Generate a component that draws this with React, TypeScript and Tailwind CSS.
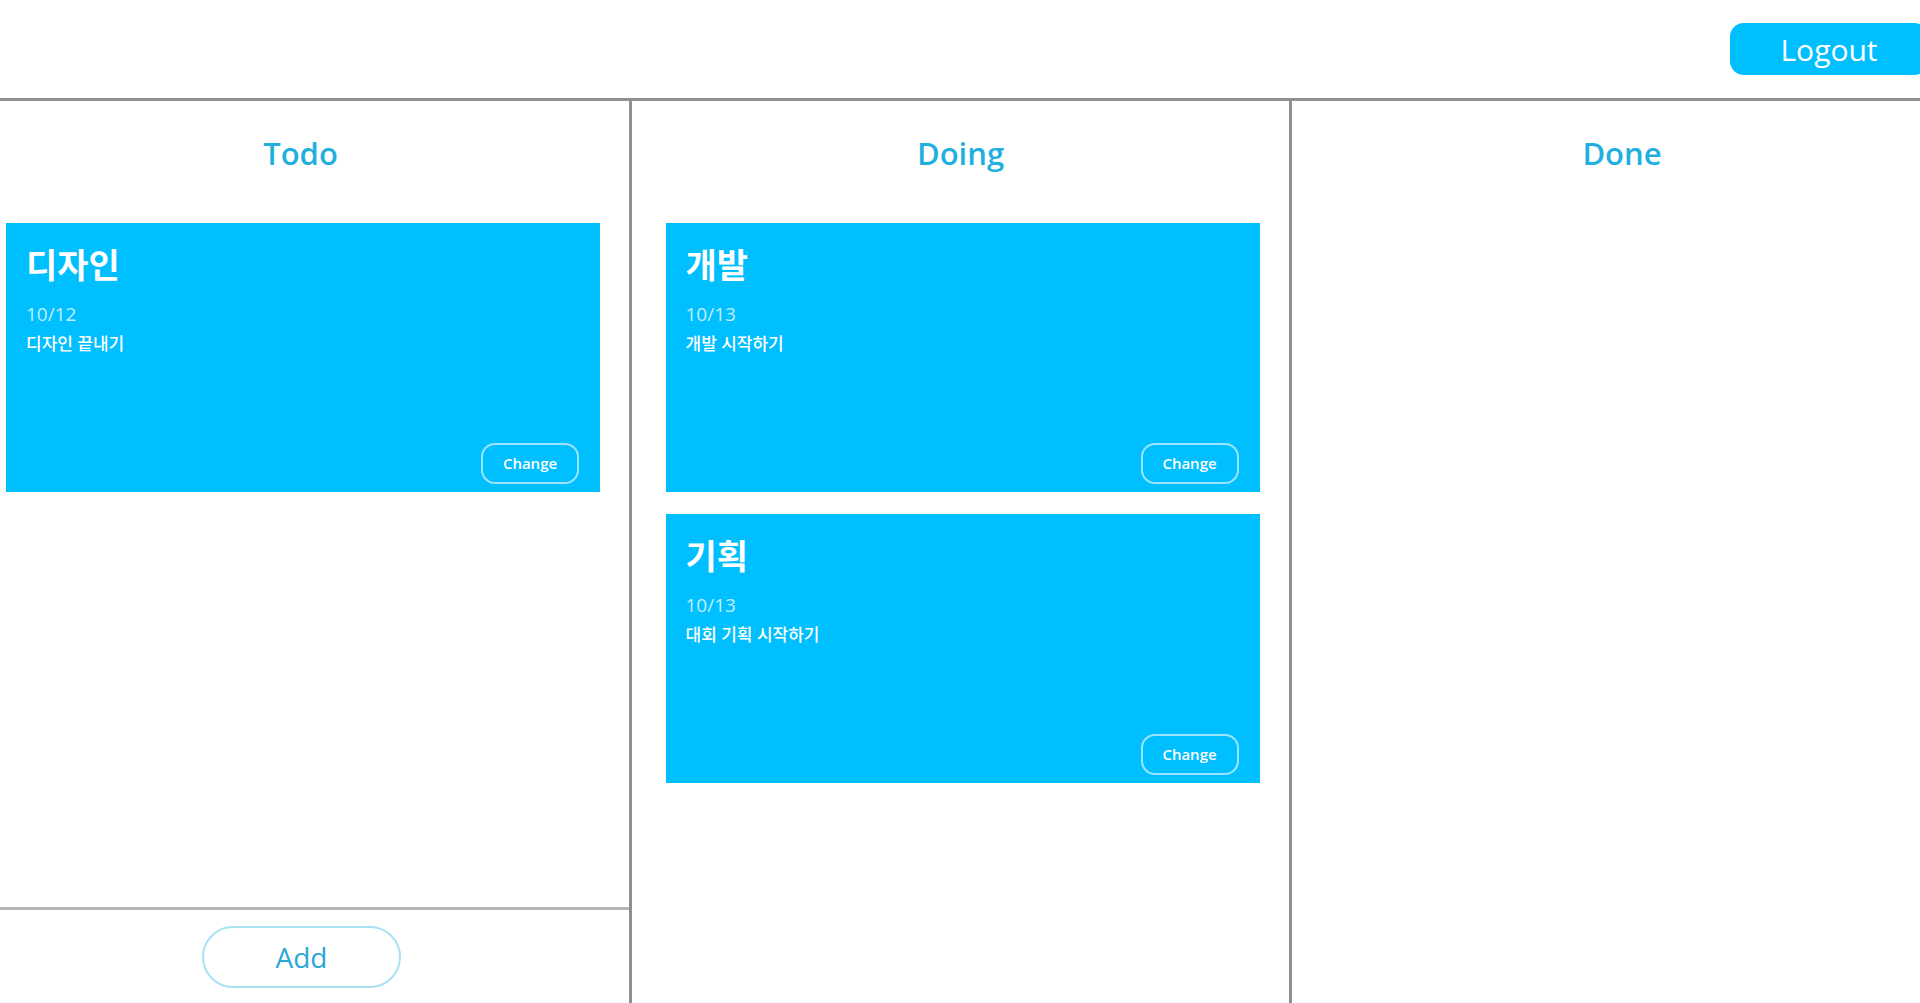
import React from "react";

interface Task {
  title: string;
  date: string;
  desc: string;
}

const todo: Task[] = [{ title: "디자인", date: "10/12", desc: "디자인 끝내기" }];
const doing: Task[] = [
  { title: "개발", date: "10/13", desc: "개발 시작하기" },
  { title: "기획", date: "10/13", desc: "대회 기획 시작하기" },
];

const font = "font-['Open_Sans','Noto_Sans_CJK_KR',sans-serif]";

const TaskCard = ({ task }: { task: Task }) => (
  <div className="w-[594px] h-[269px] bg-[#00bfff] flex flex-col px-[20px] pt-[20px] pb-[8px] text-white">
    <h3 className="text-[34px] font-bold leading-[44px]">{task.title}</h3>
    <p className="mt-[15px] text-[19px] leading-[24px] text-white/75">{task.date}</p>
    <p className="mt-[7px] text-[17px] leading-[22px] font-medium">{task.desc}</p>
    <div className="mt-auto flex justify-end">
      <button className="w-[98px] h-[41px] mr-[1px] rounded-[14px] border-2 border-white/60 text-[15px] font-semibold text-white">
        Change
      </button>
    </div>
  </div>
);

const ColumnTitle = ({ children }: { children: React.ReactNode }) => (
  <h2 className="pt-[32px] text-center text-[31px] font-semibold leading-[40px] text-[#1fb0e0]">{children}</h2>
);

const App = () => {
  return (
    <div className={`w-full h-[1003px] overflow-hidden bg-white ${font}`}>
      <header className="h-[101px] flex items-center justify-end border-b-[3px] border-[#8f8f8f]">
        <button className="w-[198px] h-[52px] mr-[-8px] rounded-[14px] bg-[#00bfff] text-[30px] text-white">
          Logout
        </button>
      </header>
      <main className="flex h-[902px]">
        <section className="w-[632px] shrink-0 border-r-[3px] border-[#8f8f8f] flex flex-col">
          <div className="flex-1 pr-[28px]">
            <ColumnTitle>Todo</ColumnTitle>
            <div className="mt-[50px] ml-[6px] flex flex-col gap-[22px]">
              {todo.map((t) => (
                <TaskCard key={t.title} task={t} />
              ))}
            </div>
          </div>
          <div className="h-[96px] border-t-[3px] border-[#b5b5b5] flex items-center justify-center pr-[26px]">
            <button className="w-[199px] h-[62px] rounded-full border-2 border-[#a8e2f4] text-[28px] text-[#2aa8d6]">
              Add
            </button>
          </div>
        </section>
        <section className="w-[660px] shrink-0 border-r-[3px] border-[#8f8f8f] flex flex-col items-center">
          <ColumnTitle>Doing</ColumnTitle>
          <div className="mt-[50px] ml-[4px] flex flex-col gap-[22px]">
            {doing.map((t) => (
              <TaskCard key={t.title} task={t} />
            ))}
          </div>
        </section>
        <section className="w-[660px] shrink-0 flex flex-col items-center">
          <ColumnTitle>Done</ColumnTitle>
        </section>
      </main>
    </div>
  );
};

export default App;
